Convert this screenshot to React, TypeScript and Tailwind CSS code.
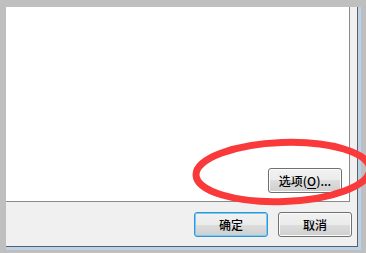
import React from "react";

const btnBase =
  "relative flex h-[25px] w-[74px] items-center justify-center rounded-[3px] border text-[12px] font-medium leading-none text-black bg-[linear-gradient(#f2f2f2_0%,#ebebeb_50%,#dddddd_50%,#cfcfcf_100%)]";

function WinButton({
  children,
  isDefault,
}: {
  children: React.ReactNode;
  isDefault?: boolean;
}) {
  return (
    <button
      className={
        btnBase +
        (isDefault
          ? " border-[#3c8fd0] shadow-[inset_0_0_0_1px_#6fd0f5]"
          : " border-[#707070] shadow-[inset_0_0_0_1px_#fcfcfc]")
      }
      style={{ fontFamily: '"Noto Sans CJK SC", "Liberation Sans", sans-serif' }}
    >
      {children}
    </button>
  );
}

export default function App() {
  return (
    <div className="relative h-[253px] w-[366px] overflow-hidden bg-[#bfbfbf] pl-[6px] pt-[7px]">
      {/* window frame */}
      <div className="h-[243px] w-[355px] border-b-[3px] border-r-[3px] border-[#b9d1ea]">
        <div className="flex h-full w-full flex-col border-b border-r border-[#5f5f5f] bg-[#f0f0f0]">
          <div className="flex h-[195px] w-[344px] items-end justify-end border-b border-r border-[#8a8a8a] bg-white pb-[8px] pr-[7px]">
            <WinButton>
              选项(<span className="underline underline-offset-2">O</span>)...
            </WinButton>
          </div>
          <div className="flex justify-end gap-[10px] pr-[5px] pt-[10px]">
            <WinButton isDefault>确定</WinButton>
            <WinButton>取消</WinButton>
          </div>
        </div>
      </div>

      {/* red annotation ring */}
      <svg
        className="pointer-events-none absolute left-0 top-0"
        width="366"
        height="253"
        viewBox="0 0 366 253"
      >
        <ellipse
          cx="283"
          cy="172"
          rx="87"
          ry="29.5"
          transform="rotate(-2 283 172)"
          fill="none"
          stroke="#fa3a3a"
          strokeWidth="7"
        />
      </svg>
    </div>
  );
}
